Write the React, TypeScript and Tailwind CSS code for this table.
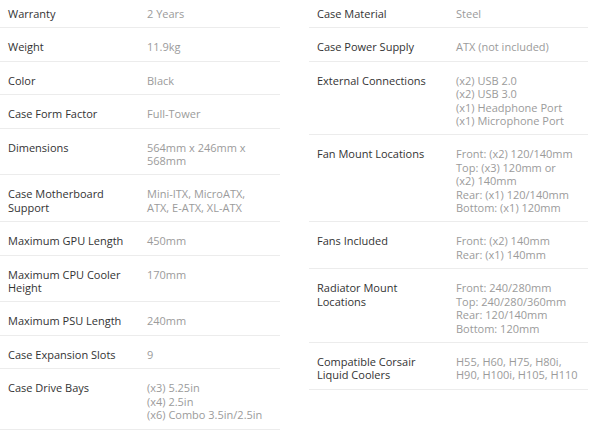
const left: [string, string[]][] = [
  ["Warranty", ["2 Years"]],
  ["Weight", ["11.9kg"]],
  ["Color", ["Black"]],
  ["Case Form Factor", ["Full-Tower"]],
  ["Dimensions", ["564mm x 246mm x 568mm"]],
  ["Case Motherboard Support", ["Mini-ITX, MicroATX, ATX, E-ATX, XL-ATX"]],
  ["Maximum GPU Length", ["450mm"]],
  ["Maximum CPU Cooler Height", ["170mm"]],
  ["Maximum PSU Length", ["240mm"]],
  ["Case Expansion Slots", ["9"]],
  ["Case Drive Bays", ["(x3) 5.25in", "(x4) 2.5in", "(x6) Combo 3.5in/2.5in"]],
];

const right: [string, string[]][] = [
  ["Case Material", ["Steel"]],
  ["Case Power Supply", ["ATX (not included)"]],
  [
    "External Connections",
    ["(x2) USB 2.0", "(x2) USB 3.0", "(x1) Headphone Port", "(x1) Microphone Port"],
  ],
  [
    "Fan Mount Locations",
    [
      "Front: (x2) 120/140mm",
      "Top: (x3) 120mm or",
      "(x2) 140mm",
      "Rear: (x1) 120/140mm",
      "Bottom: (x1) 120mm",
    ],
  ],
  ["Fans Included", ["Front: (x2) 140mm", "Rear: (x1) 140mm"]],
  [
    "Radiator Mount Locations",
    ["Front: 240/280mm", "Top: 240/280/360mm", "Rear: 120/140mm", "Bottom: 120mm"],
  ],
  ["Compatible Corsair Liquid Coolers", ["H55, H60, H75, H80i, H90, H100i, H105, H110"]],
];

function SpecRow({ label, values }: { label: string; values: string[] }) {
  return (
    <div className="flex border-b border-[#ececec] pl-2 pt-[12px] pb-[7px] leading-[13.4px]">
      <div className="w-[139px] shrink-0 pr-4 text-[#333333]">{label}</div>
      <div className="flex-1 pr-[10px] text-[#9b9b9b]">
        {values.map((v) => (
          <div key={v}>{v}</div>
        ))}
      </div>
    </div>
  );
}

export default function App() {
  return (
    <div
      className="w-[600px] h-[433px] overflow-hidden bg-white text-[11px]"
      style={{ fontFamily: '"Open Sans", sans-serif' }}
    >
      <div className="flex -mt-[5px]">
        <div className="w-[280px]">
          {left.map(([l, v]) => (
            <SpecRow key={l} label={l} values={v} />
          ))}
        </div>
        <div className="ml-[29px] w-[279px]">
          {right.map(([l, v]) => (
            <SpecRow key={l} label={l} values={v} />
          ))}
        </div>
      </div>
    </div>
  );
}
